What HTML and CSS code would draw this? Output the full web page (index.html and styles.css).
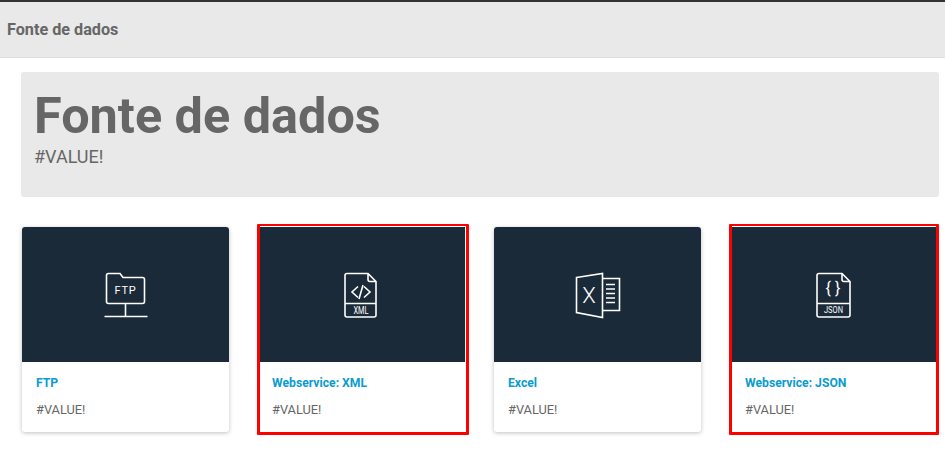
FILE: index.html
```html
<!DOCTYPE html>
<html lang="pt">
<head>
    <meta charset="UTF-8">
    <title>Fonte de dados</title>
    <link rel="stylesheet" href="styles.css">
</head>
<body>
    <header class="topbar">
        <span class="topbar-title">Fonte de dados</span>
    </header>
    <main class="content">
        <section class="jumbotron">
            <h1>Fonte de dados</h1>
            <p>#VALUE!</p>
        </section>
        <div class="cards">
            <div class="card">
                <div class="card-image">
                    <svg class="icon" viewBox="0 0 60 60">
                        <path d="M10.5 36.5V10.5a2 2 0 0 1 2-2H24l3 4h19.500a2 2 0 0 1 2 2v22a2 2 0 0 1-2 2h-34a2 2 0 0 1-2-2zM29.500 38.500v13M8.500 51.500h43"/>
                        <text class="icon-label" x="29.500" y="28.500" text-anchor="middle">FTP</text>
                    </svg>
                </div>
                <div class="card-body">
                    <a class="card-title">FTP</a>
                    <p>#VALUE!</p>
                </div>
            </div>
            <div class="card selected">
                <div class="card-image">
                    <svg class="icon" viewBox="0 0 60 60">
                        <path d="M14 8.500h21l8 8v33.500a2 2 0 0 1-2 2H14a2 2 0 0 1-2-2V10.500a2 2 0 0 1 2-2zM35 8.500v6a2 2 0 0 0 2 2h6M12 38.500h31M25 21.500l-6 5.500 6 5.500M31 21.500l6 5.500-6 5.500M30 20l-4 14"/>
                        <text class="icon-xml" x="28" y="48.500" text-anchor="middle" textLength="15" lengthAdjust="spacingAndGlyphs">XML</text>
                    </svg>
                </div>
                <div class="card-body">
                    <a class="card-title">Webservice: XML</a>
                    <p>#VALUE!</p>
                </div>
            </div>
            <div class="card">
                <div class="card-image">
                    <svg class="icon" viewBox="0 0 60 60">
                        <path d="M8.500 12.500l26-4v44l-26-5zM34.500 13.500h17v32h-17M38 19.500h9M38 24h9M38 28.500h9M38 33h9M38 37.500h9"/>
                        <text class="icon-x" x="21" y="37.500" text-anchor="middle">X</text>
                    </svg>
                </div>
                <div class="card-body">
                    <a class="card-title">Excel</a>
                    <p>#VALUE!</p>
                </div>
            </div>
            <div class="card selected last">
                <div class="card-image">
                    <svg class="icon" viewBox="0 0 60 60">
                        <path d="M15 8.500h23l8 8v33.500a2 2 0 0 1-2 2H15a2 2 0 0 1-2-2V10.500a2 2 0 0 1 2-2zM38 8.500v6a2 2 0 0 0 2 2h6M13 38.500h33"/>
                        <text class="icon-brace" x="29" y="29" text-anchor="middle">{ }</text>
                        <text class="icon-json" x="29.500" y="47.500" text-anchor="middle" textLength="19" lengthAdjust="spacingAndGlyphs">JSON</text>
                    </svg>
                </div>
                <div class="card-body">
                    <a class="card-title">Webservice: JSON</a>
                    <p>#VALUE!</p>
                </div>
            </div>
        </div>
    </main>
</body>
</html>
```

FILE: styles.css
```css
* { box-sizing: border-box; }
body {
    margin: 0;
    font-family: Roboto, "Liberation Sans", sans-serif;
    color: #666;
    background-color: #fff;
}
.topbar {
    height: 58px;
    padding: 0 7px;
    display: flex;
    align-items: center;
    background-color: #e9e9e9;
    border-top: 2px solid #333;
    border-bottom: 1px solid #ddd;
}
.topbar-title { font-size: 16.200px; font-weight: 700; }
.content { padding: 14px 6px 17px 21px; }
.jumbotron {
    height: 125px;
    padding: 14px 13px;
    background-color: #e9e9e9;
    border-radius: 3px;
}
.jumbotron h1 {
    margin: 0;
    font-size: 50.400px;
    line-height: 60px;
    font-weight: 700;
}
.jumbotron p {
    margin: 0;
    font-size: 18px;
    line-height: 22px;
}
.cards {
    display: flex;
    gap: 28px;
    margin-top: 30px;
    padding-left: 1px;
}
.card {
    width: 207px;
    height: 205px;
    border-radius: 3px;
    background-color: #fff;
    box-shadow: 0 1px 4px rgba(0, 0, 0, 0.25);
}
.card.selected {
    width: 212px;
    height: 211px;
    margin: -3px -3px 0 0;
    padding-top: 1px;
    border: 3px solid #f00;
    border-top-width: 2px;
    border-radius: 1px;
    box-shadow: none;
}
.card.last { width: 210px; margin-right: 0; }
.card-image {
    height: 135px;
    display: flex;
    align-items: center;
    justify-content: center;
    background-color: #1b2a38;
    border-radius: 3px 3px 0 0;
}
.selected .card-image { margin-right: 1px; border-radius: 0; }
.last .card-image { margin-right: 0; }
.icon {
    width: 60px;
    height: 60px;
    fill: none;
    stroke: #fff;
    stroke-width: 1.600;
}
.icon text { fill: #fff; stroke: none; font-family: Roboto, sans-serif; }
.icon-label { font-size: 11px; letter-spacing: 0.800px; }
.icon-xml { font-size: 10px; }
.icon-json { font-size: 8.500px; }
.icon-x { font-size: 22px; font-weight: 300; }
.icon-brace { font-size: 16px; }
.card-body { padding: 14px; }
.selected .card-body { padding: 14px 12px; }
.last .card-body { padding: 14px 13px; }
.card-title {
    display: block;
    color: #0a9bd0;
    font-size: 12.200px;
    font-weight: 700;
    line-height: 15px;
}
.card-body p {
    margin: 11px 0 0;
    font-size: 12.800px;
    line-height: 15px;
}
```
